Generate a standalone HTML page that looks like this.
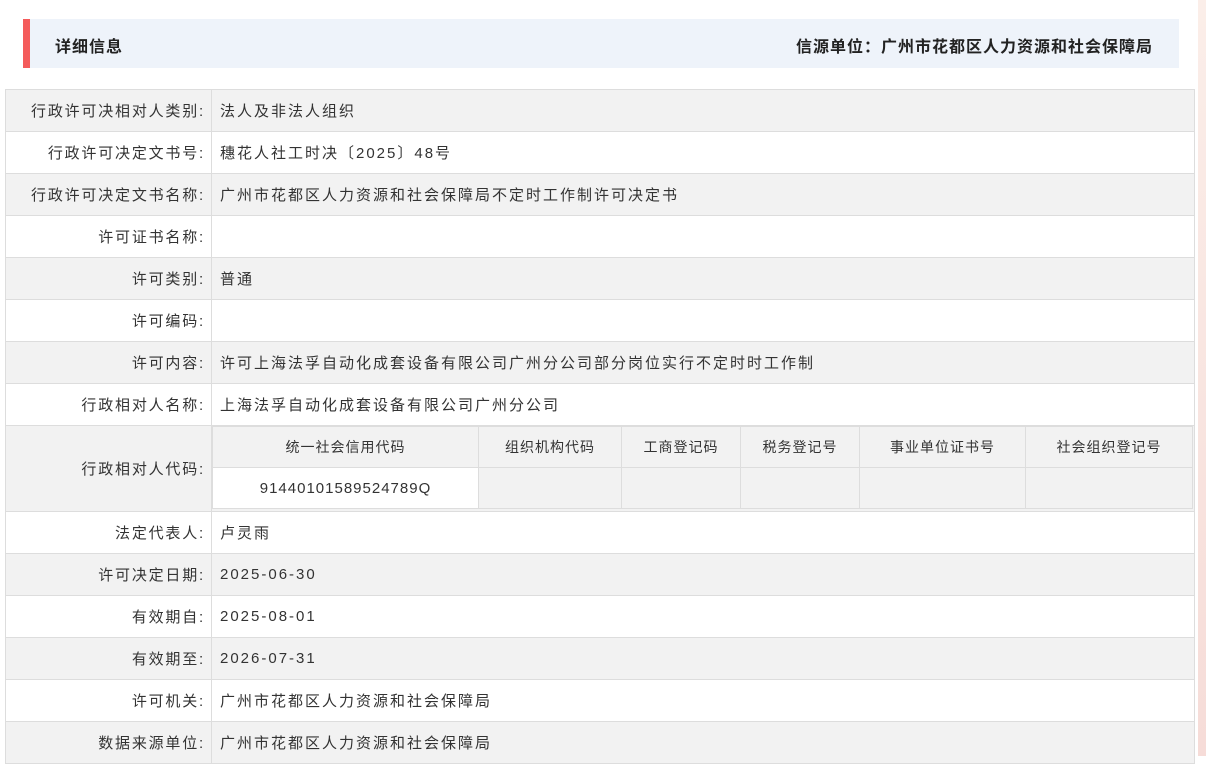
<!DOCTYPE html><html><head><meta charset="utf-8"><style>
body{margin:0;width:1206px;height:756px;overflow:hidden;background:#fff;font-family:"Liberation Sans","Noto Sans CJK SC",sans-serif;font-size:15px;letter-spacing:2px;color:#333;position:relative}
.edge{position:absolute;left:1198px;top:0;width:8px;height:756px;background:linear-gradient(#fbeee9,#f6dcd8)}
.hd{position:absolute;left:23px;top:19px;width:1156px;height:49px;background:#eef3fa;border-left:7px solid #f45b5b;box-sizing:border-box;font-weight:bold;font-size:16px;color:#222;letter-spacing:1px}
.hd .l{position:absolute;left:25px;top:14px}.hd .r{position:absolute;right:26px;top:14px}
table.m{position:absolute;left:5px;top:89px;width:1190px;border-collapse:collapse}
table.m>tbody>tr>td{border:1px solid #ddd;height:41px;padding:0}
table.m td.k{width:199px;text-align:right;padding-right:6px;letter-spacing:1.8px}
table.m td.v{padding-left:8px}
tr.g>td{background:#f2f2f2}
table.i{width:981px;border-collapse:collapse;font-size:14px;table-layout:fixed;letter-spacing:1px}
table.i td{border:1px solid #ddd;height:41px;padding:0;text-align:center;background:#f2f2f2;box-sizing:border-box}
</style></head><body>
<div class="edge"></div>
<div class="hd"><span class="l">详细信息</span><span class="r">信源单位：广州市花都区人力资源和社会保障局</span></div>
<table class="m"><tbody>
<tr class="g"><td class="k">行政许可决相对人类别:</td><td class="v">法人及非法人组织</td></tr>
<tr><td class="k">行政许可决定文书号:</td><td class="v">穗花人社工时决〔2025〕48号</td></tr>
<tr class="g"><td class="k">行政许可决定文书名称:</td><td class="v">广州市花都区人力资源和社会保障局不定时工作制许可决定书</td></tr>
<tr><td class="k">许可证书名称:</td><td class="v"></td></tr>
<tr class="g"><td class="k">许可类别:</td><td class="v">普通</td></tr>
<tr><td class="k">许可编码:</td><td class="v"></td></tr>
<tr class="g"><td class="k">许可内容:</td><td class="v">许可上海法孚自动化成套设备有限公司广州分公司部分岗位实行不定时时工作制</td></tr>
<tr><td class="k">行政相对人名称:</td><td class="v">上海法孚自动化成套设备有限公司广州分公司</td></tr>
<tr class="g"><td class="k" style="height:85px">行政相对人代码:</td><td style="padding:0;vertical-align:top"><table class="i"><colgroup><col style="width:266px"><col style="width:143px"><col style="width:119px"><col style="width:119px"><col style="width:166px"><col></colgroup><tr><td>统一社会信用代码</td><td>组织机构代码</td><td>工商登记码</td><td>税务登记号</td><td>事业单位证书号</td><td>社会组织登记号</td></tr><tr><td style="background:#fff;font-size:15px">91440101589524789Q</td><td></td><td></td><td></td><td></td><td></td></tr></table></td></tr>
<tr><td class="k">法定代表人:</td><td class="v">卢灵雨</td></tr>
<tr class="g"><td class="k">许可决定日期:</td><td class="v">2025-06-30</td></tr>
<tr><td class="k">有效期自:</td><td class="v">2025-08-01</td></tr>
<tr class="g"><td class="k">有效期至:</td><td class="v">2026-07-31</td></tr>
<tr><td class="k">许可机关:</td><td class="v">广州市花都区人力资源和社会保障局</td></tr>
<tr class="g"><td class="k">数据来源单位:</td><td class="v">广州市花都区人力资源和社会保障局</td></tr>
</tbody></table>
</body></html>
